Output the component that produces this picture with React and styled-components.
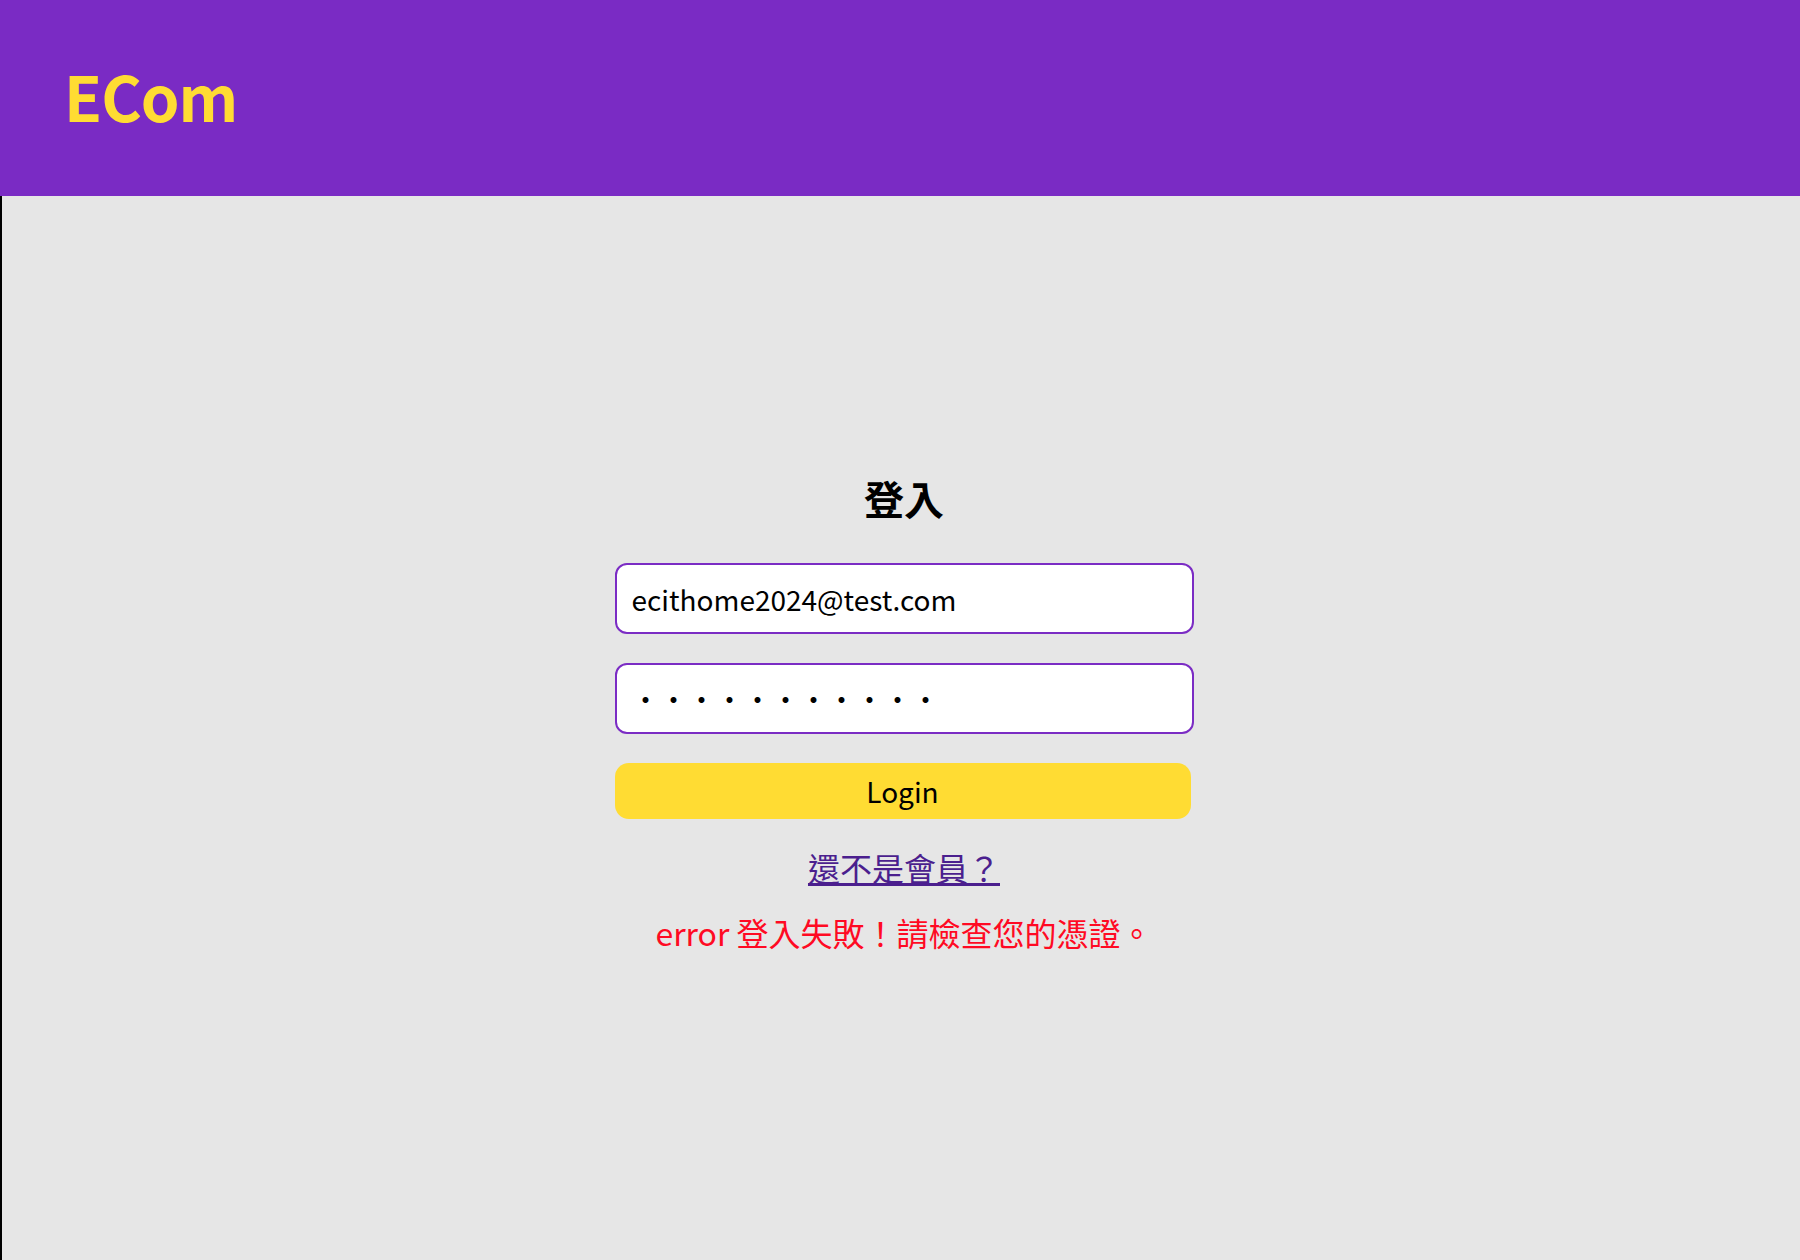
import React, { useState } from 'react'
import styled, { createGlobalStyle } from 'styled-components';

const GlobalStyle = createGlobalStyle`
  html, body {
    margin: 0;
    padding: 0;
    background: #e6e6e6;
    font-family: "Noto Sans CJK TC", "Noto Sans", sans-serif;
  }
`;

const App = () => {
  const [email, setEmail] = useState("ecithome2024@test.com");
  const [password, setPassword] = useState("12345678901");

  return (
    <>
      <GlobalStyle />
      <Header>
        <Logo>ECom</Logo>
      </Header>
      <Main>
        <Form onSubmit={(e) => e.preventDefault()}>
          <Title>登入</Title>
          <Input type="email" value={email} onChange={(e) => setEmail(e.target.value)} />
          <Input type="password" value={password} onChange={(e) => setPassword(e.target.value)} />
          <LoginButton type="submit">Login</LoginButton>
          <RegisterLink href="#">還不是會員？</RegisterLink>
          <ErrorText>error 登入失敗！請檢查您的憑證。</ErrorText>
        </Form>
      </Main>
    </>
  )
}

export default App


const Header = styled.header`
  height: 196px;
  box-sizing: border-box;
  background-color: #7a2bc4;
  display: flex;
  align-items: center;
  padding: 0 64px 7px;
`;

const Logo = styled.a`
  color: #ffdc33;
  font-size: 62px;
  font-weight: 700;
  line-height: 1;
  text-decoration: none;
  letter-spacing: -1px;
`;

const Main = styled.main`
  min-height: calc(100vh - 196px);
  border-left: 2px solid #000;
  box-sizing: border-box;
  display: flex;
  justify-content: center;
  padding: 278px 0 0 6px;
`;

const Form = styled.form`
  width: 579px;
  display: flex;
  flex-direction: column;
  align-items: center;
`;

const Title = styled.h2`
  margin: 0 0 41px;
  font-size: 40px;
  line-height: 48px;
  font-weight: 700;
  color: #000;
`;

const Input = styled.input`
  width: 100%;
  height: 71px;
  box-sizing: border-box;
  border: 2px solid #7b2cc4;
  border-radius: 12px;
  background: #fff;
  padding: 0 15px;
  margin-bottom: 29px;
  font-family: "Noto Sans CJK TC", "Noto Sans", sans-serif;
  font-size: 28px;
  color: #000;
  outline: none;
`;

const LoginButton = styled.button`
  align-self: flex-start;
  width: 576px;
  height: 56px;
  border: none;
  border-radius: 14px;
  background: #ffdc33;
  color: #000;
  font-family: "Noto Sans CJK TC", "Noto Sans", sans-serif;
  font-size: 28px;
  cursor: pointer;
`;

const RegisterLink = styled.a`
  margin-top: 28px;
  font-size: 32px;
  line-height: 40px;
  color: #4b1f8e;
  text-decoration: underline;
`;

const ErrorText = styled.p`
  margin: 25px 0 0;
  font-size: 32px;
  line-height: 40px;
  color: #ff0a23;
`;
